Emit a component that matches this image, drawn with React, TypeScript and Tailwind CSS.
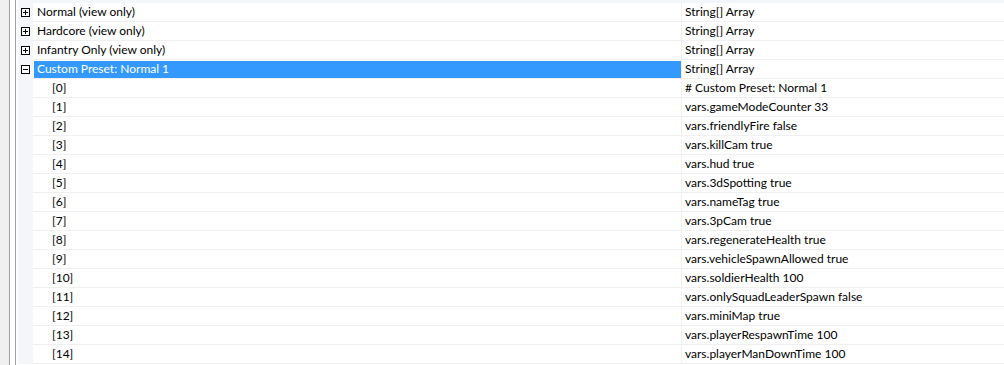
import React from "react";

type Row = { name: string; value: string; kind: "plus" | "minus" | "child"; selected?: boolean };

const rows: Row[] = [
  { name: "Normal (view only)", value: "String[] Array", kind: "plus" },
  { name: "Hardcore (view only)", value: "String[] Array", kind: "plus" },
  { name: "Infantry Only (view only)", value: "String[] Array", kind: "plus" },
  { name: "Custom Preset: Normal 1", value: "String[] Array", kind: "minus", selected: true },
  { name: "[0]", value: "# Custom Preset: Normal 1", kind: "child" },
  { name: "[1]", value: "vars.gameModeCounter 33", kind: "child" },
  { name: "[2]", value: "vars.friendlyFire false", kind: "child" },
  { name: "[3]", value: "vars.killCam true", kind: "child" },
  { name: "[4]", value: "vars.hud true", kind: "child" },
  { name: "[5]", value: "vars.3dSpotting true", kind: "child" },
  { name: "[6]", value: "vars.nameTag true", kind: "child" },
  { name: "[7]", value: "vars.3pCam true", kind: "child" },
  { name: "[8]", value: "vars.regenerateHealth true", kind: "child" },
  { name: "[9]", value: "vars.vehicleSpawnAllowed true", kind: "child" },
  { name: "[10]", value: "vars.soldierHealth 100", kind: "child" },
  { name: "[11]", value: "vars.onlySquadLeaderSpawn false", kind: "child" },
  { name: "[12]", value: "vars.miniMap true", kind: "child" },
  { name: "[13]", value: "vars.playerRespawnTime 100", kind: "child" },
  { name: "[14]", value: "vars.playerManDownTime 100", kind: "child" },
];

function Expander({ open }: { open: boolean }) {
  return (
    <div className="w-[9px] h-[9px] border border-black bg-white relative">
      <div className="absolute left-[1px] right-[1px] top-[3px] h-[1px] bg-black" />
      {!open && <div className="absolute top-[1px] bottom-[1px] left-[3px] w-[1px] bg-black" />}
    </div>
  );
}

export default function App() {
  return (
    <div
      className="w-[1004px] h-[365px] bg-white flex overflow-hidden text-[12px] text-black"
      style={{ fontFamily: 'Lato, "Liberation Sans", sans-serif' }}
    >
      {/* window frame edges on the left */}
      <div className="w-[9px] bg-[#f0f0f0] shrink-0" />
      <div className="w-[1px] bg-[#a0a0a0] shrink-0" />
      <div className="w-[5px] bg-white shrink-0" />
      <div className="w-[1px] bg-[#a0a0a0] shrink-0" />
      <div className="w-[2px] bg-white shrink-0" />

      <div className="flex-1 flex flex-col">
        <div className="h-[3px] bg-[#f3f6fb]" />
        {rows.map((r, i) => (
          <div key={i} className="flex h-[19px]">
            {/* gutter */}
            <div className="w-[15px] shrink-0 bg-[#f4f6fa] flex items-center justify-center pb-[1px]">
              {r.kind !== "child" && <Expander open={r.kind === "minus"} />}
            </div>
            <div className="flex-1 flex border-b border-[#f0f0f0]">
              <div className="w-[648px] shrink-0 flex items-center">
                {r.kind === "child" ? (
                  <span className="pl-[19px] leading-none">{r.name}</span>
                ) : (
                  <div
                    className={
                      r.selected
                        ? "ml-[1px] w-[647px] h-[17px] bg-[#3399ff] text-white flex items-center pl-[3px]"
                        : "ml-[1px] h-[17px] flex items-center pl-[3px]"
                    }
                  >
                    {r.name}
                  </div>
                )}
              </div>
              <div className="w-[1px] bg-[#f0f0f0] shrink-0" />
              <div className="flex-1 flex items-center pl-[3px]">{r.value}</div>
            </div>
          </div>
        ))}
      </div>
    </div>
  );
}
